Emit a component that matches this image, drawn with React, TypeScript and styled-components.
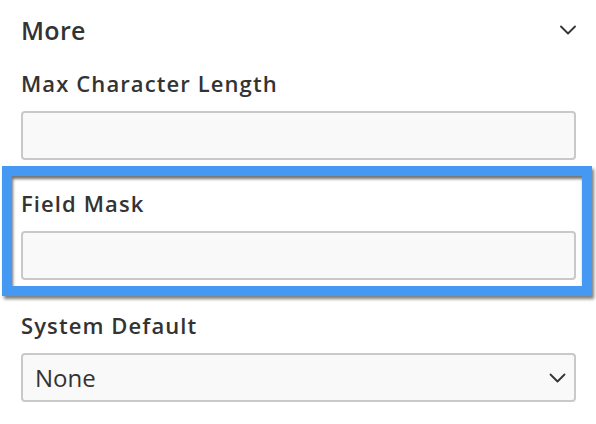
import styled, { createGlobalStyle } from "styled-components";

const GlobalStyle = createGlobalStyle`
  html, body {
    margin: 0;
    padding: 0;
    background: #ffffff;
  }
  body {
    font-family: "Open Sans", "Liberation Sans", sans-serif;
    color: #333333;
  }
`;

const Panel = styled.div`
  width: 596px;
  height: 424px;
  box-sizing: border-box;
  padding: 14px 20px 0 21px;
  display: flex;
  flex-direction: column;
  overflow: hidden;
`;

const Header = styled.div`
  display: flex;
  align-items: center;
  justify-content: space-between;
  height: 32px;
`;

const HeaderTitle = styled.h2`
  margin: 0;
  font-size: 25px;
  line-height: 32px;
  font-weight: 600;
  letter-spacing: 0.3px;
  color: #333333;
`;

const ToggleButton = styled.button`
  border: none;
  background: none;
  padding: 0;
  display: flex;
  align-items: center;
  color: #333333;
  cursor: pointer;
`;

const Field = styled.div`
  display: flex;
  flex-direction: column;
  gap: 15px;
  margin-top: ${(p: { $top: number }) => p.$top}px;
`;

const Label = styled.label`
  font-size: 22px;
  line-height: 26px;
  font-weight: 600;
  letter-spacing: 1.1px;
  color: #333333;
`;

const TextInput = styled.input`
  box-sizing: border-box;
  height: 49px;
  width: 100%;
  border: 2px solid #c9c9c9;
  border-radius: 4px;
  background: #f9f9f9;
  padding: 0 12px;
  font-family: inherit;
  font-size: 24px;
  color: #333333;
  outline: none;
`;

const Highlight = styled.div`
  margin: 6px -16px 0 -19px;
  padding: 14px 6px 6px 9px;
  border: 10px solid #4599f3;
  box-shadow: inset 1px 3px 3px rgba(0, 0, 0, 0.55), 2px 3px 3px rgba(0, 0, 0, 0.5);
`;

const SelectBox = styled.div`
  box-sizing: border-box;
  height: 49px;
  border: 2px solid #c9c9c9;
  border-radius: 4px;
  background: #f9f9f9;
  display: flex;
  align-items: center;
  justify-content: space-between;
  padding: 0 8px 0 12px;
`;

const SelectValue = styled.span`
  font-size: 24px;
  line-height: 30px;
  color: #333333;
`;

const Chevron = ({ w }: { w: number }) => (
  <svg width={w} height={10} viewBox="0 0 16 10" fill="none">
    <path d="M1 1.5 L8 8.5 L15 1.5" stroke="#333333" strokeWidth={1.8} strokeLinecap="round" strokeLinejoin="round" />
  </svg>
);

export default function App() {
  return (
    <>
      <GlobalStyle />
      <Panel>
        <Header>
          <HeaderTitle>More</HeaderTitle>
          <ToggleButton aria-label="Collapse">
            <Chevron w={16} />
          </ToggleButton>
        </Header>

        <Field $top={24}>
          <Label>Max Character Length</Label>
          <TextInput />
        </Field>

        <Highlight>
          <Field $top={0}>
            <Label>Field Mask</Label>
            <TextInput />
          </Field>
        </Highlight>

        <Field $top={16}>
          <Label>System Default</Label>
          <SelectBox>
            <SelectValue>None</SelectValue>
            <Chevron w={17} />
          </SelectBox>
        </Field>
      </Panel>
    </>
  );
}
